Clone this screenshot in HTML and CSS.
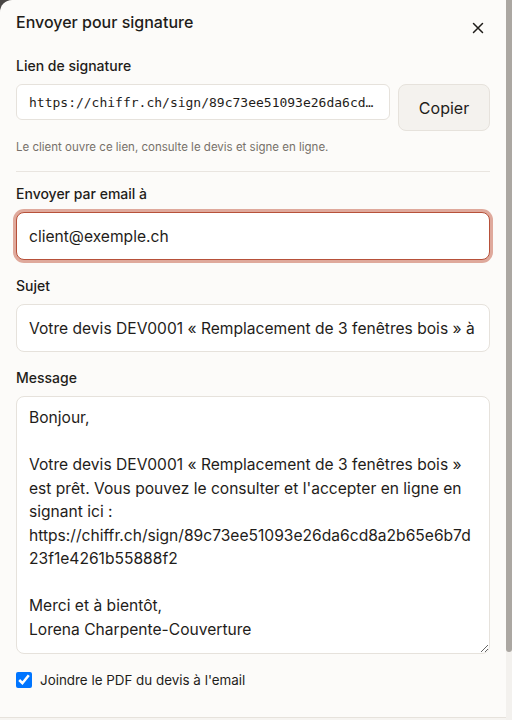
FILE: index.html
```html
<!DOCTYPE html>
<html lang="fr">
<head>
<meta charset="utf-8">
<title>Envoyer pour signature</title>
<link rel="stylesheet" href="styles.css">
</head>
<body>
<div class="frame">
  <div class="dialog">
    <div class="header">
      <h2 class="title">Envoyer pour signature</h2>
      <button class="close" aria-label="Fermer">
        <svg width="12" height="12" viewBox="0 0 12 12"><path d="M1.5 1.5 L10.5 10.5 M10.5 1.5 L1.5 10.5" stroke="#1f1d1a" stroke-width="1.5" stroke-linecap="round"/></svg>
      </button>
    </div>
    <div class="content">
      <div class="field">
        <label class="label">Lien de signature</label>
        <div class="link-row">
          <input class="link-input" type="text" readonly value="https://chiffr.ch/sign/89c73ee51093e26da6cd8a2b65e6b7d23f1e4261b55888f2">
          <button class="copy">Copier</button>
        </div>
        <p class="help">Le client ouvre ce lien, consulte le devis et signe en ligne.</p>
      </div>
      <hr class="divider">
      <div class="field">
        <label class="label">Envoyer par email à</label>
        <input class="input focus" type="email" value="client@exemple.ch">
      </div>
      <div class="field">
        <label class="label">Sujet</label>
        <input class="input" type="text" value="Votre devis DEV0001 « Remplacement de 3 fenêtres bois » à signer">
      </div>
      <div class="field">
        <label class="label">Message</label>
        <textarea class="textarea" wrap="off">Bonjour,

Votre devis DEV0001 « Remplacement de 3 fenêtres bois »
est prêt. Vous pouvez le consulter et l'accepter en ligne en
signant ici :
https://chiffr.ch/sign/89c73ee51093e26da6cd8a2b65e6b7d
23f1e4261b55888f2

Merci et à bientôt,
Lorena Charpente-Couverture</textarea>
      </div>
      <label class="check">
        <input type="checkbox" checked>
        <span>Joindre le PDF du devis à l'email</span>
      </label>
    </div>
    <div class="footer"></div>
  </div>
  <div class="scrollbar"><div class="thumb"></div></div>
</div>
</body>
</html>
```
FILE: styles.css
```css
* { box-sizing: border-box; }
html, body { margin: 0; height: 100%; overflow: hidden; }
body {
  background: #4a4745;
  font-family: Inter, "DejaVu Sans", sans-serif;
  color: #1f1d1a;
}
.frame {
  display: flex;
  height: 720px;
  background: #fcfbf9;
  border-top-left-radius: 12px;
  overflow: hidden;
}
.dialog {
  flex: 1;
  min-width: 0;
  overflow: hidden;
}
.scrollbar {
  width: 6px;
  background: #f3f1ee;
}
.thumb {
  height: 652px;
  background: #aba7a2;
  border-radius: 0 0 3px 3px;
}
.header {
  display: flex;
  justify-content: space-between;
  align-items: flex-start;
  padding: 10px 16px 0 16px;
}
.title {
  margin: 0;
  font-size: 16px;
  line-height: 24px;
  font-weight: 500;
}
.close {
  margin-top: 6px;
  width: 24px;
  height: 24px;
  border: 0;
  background: transparent;
  display: flex;
  align-items: center;
  justify-content: center;
  padding: 0;
}
.content {
  padding: 16px 16px 27px 16px;
  display: flex;
  flex-direction: column;
  gap: 16px;
}
.field { display: flex; flex-direction: column; }
.label {
  font-size: 14px;
  line-height: 20px;
  font-weight: 500;
  margin-bottom: 8px;
}
.link-row { display: flex; gap: 8px; align-items: flex-start; }
.link-input {
  flex: 1;
  min-width: 0;
  height: 36px;
  border: 1px solid #e6e2dc;
  border-radius: 6px;
  background: #fff;
  padding: 0 12px;
  font-family: "DejaVu Sans Mono", monospace;
  font-size: 13px;
  color: #1f1d1a;
  text-overflow: ellipsis;
  outline: none;
}
.copy {
  width: 92px;
  height: 47px;
  border: 1px solid #e6e2dc;
  border-radius: 8px;
  background: #f4f2ee;
  font-family: inherit;
  font-size: 16px;
  color: #1f1d1a;
}
.help {
  margin: 8px 0 0;
  font-size: 11.5px;
  line-height: 16px;
  color: #77716a;
}
.divider {
  margin: 0 0 -4px;
  border: 0;
  border-top: 1px solid #e9e5e0;
}
.input {
  height: 48px;
  border: 1px solid #e6e2dc;
  border-radius: 8px;
  background: #fff;
  padding: 0 12px;
  font-family: inherit;
  font-size: 15.6px;
  color: #1f1d1a;
  outline: none;
}
.input.focus {
  border-color: #b7513a;
  box-shadow: 0 0 0 3px #dfa99c;
}
.textarea {
  height: 258px;
  border: 1px solid #e6e2dc;
  border-radius: 8px;
  background: #fff;
  padding: 9px 12px;
  font-family: inherit;
  font-size: 15.6px;
  line-height: 23.5px;
  color: #1f1d1a;
  resize: vertical;
  overflow: hidden;
  outline: none;
}
.check {
  display: flex;
  align-items: center;
  gap: 8px;
  font-size: 13.4px;
  line-height: 20px;
}
.check input { width: 16px; height: 16px; margin: 0; }
.footer {
  border-top: 1px solid #e6e2dc;
  background: #f6f4f1;
  height: 72px;
}
```
